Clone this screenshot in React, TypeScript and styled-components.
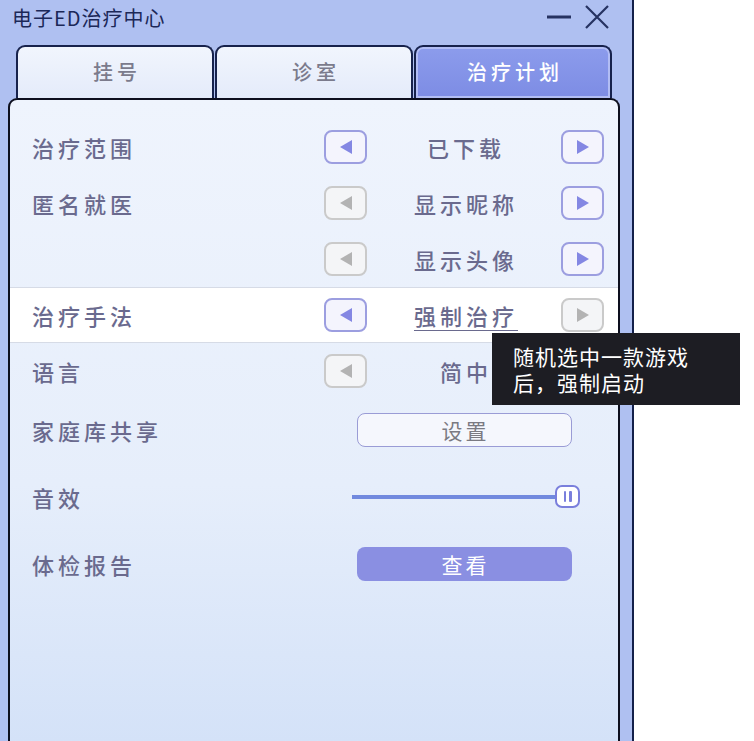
import React from 'react';
import styled, { createGlobalStyle, css } from 'styled-components';

const GlobalStyle = createGlobalStyle`
    html, body {
        margin: 0;
        padding: 0;
        background: #ffffff;
    }
    body {
        font-family: 'Noto Sans CJK SC', 'Noto Sans', sans-serif;
    }
`;

const Page = styled.div`
    position: relative;
    width: 754px;
    height: 741px;
    overflow: hidden;
    background: #ffffff;
`;

const Window = styled.div`
    width: 632px;
    height: 741px;
    display: flex;
    flex-direction: column;
    background: #afc0f1;
    border-right: 2px solid #14204a;
    overflow: hidden;
`;

const TitleBar = styled.div`
    height: 45px;
    display: flex;
    align-items: flex-start;
    justify-content: space-between;
    padding: 5px 22px 0 12px;
    box-sizing: border-box;
`;

const Title = styled.div`
    font-size: 20px;
    line-height: 26px;
    letter-spacing: 1px;
    color: #1c2858;
`;

const WindowControls = styled.div`
    display: flex;
    align-items: center;
    gap: 12px;
    margin-top: -1px;
`;

const TabRow = styled.div`
    display: flex;
    gap: 1px;
    padding-left: 16px;
    height: 53px;
`;

const Tab = styled.div<{ $active?: boolean }>`
    width: 198px;
    box-sizing: border-box;
    border: 2px solid #17224c;
    border-bottom: none;
    border-radius: 9px 9px 0 0;
    display: flex;
    align-items: center;
    justify-content: center;
    padding-bottom: 2px;
    font-size: 20px;
    font-weight: 500;
    letter-spacing: 4px;
    text-indent: 4px;
    color: #7b7b8c;
    background: linear-gradient(#f1f5fd, #e4ebfa);
    ${(p) =>
        p.$active &&
        css`
            color: #ffffff;
            background: linear-gradient(#8c9cec, #7d8ce4);
            box-shadow: inset 0 0 0 2px #b2bdf4;
        `}
`;

const Panel = styled.div`
    margin-left: 8px;
    width: 612px;
    flex: 1;
    box-sizing: border-box;
    border: 2px solid #0d0f1e;
    border-bottom: none;
    border-radius: 9px 9px 0 0;
    background: linear-gradient(#eff4fd 0%, #e6eefb 60%, #d4e2f8 100%);
    padding-top: 19px;
`;

const ActionList = styled.div`
    margin-top: -3px;
`;

const Row = styled.div<{ $tall?: boolean; $highlight?: boolean }>`
    display: grid;
    grid-template-columns: 1fr 280px;
    align-items: center;
    height: ${(p) => (p.$tall ? 67 : 56)}px;
    padding: 0 14px 0 22px;
    box-sizing: border-box;
    ${(p) =>
        p.$highlight &&
        css`
            background: #ffffff;
            border-top: 1px solid #d6dbe6;
            border-bottom: 1px solid #d6dbe6;
        `}
`;

const Label = styled.div`
    font-size: 22px;
    font-weight: 500;
    letter-spacing: 4px;
    color: #6a6a8e;
`;

const Chooser = styled.div`
    display: grid;
    grid-template-columns: 43px 1fr 43px;
    align-items: center;
`;

const Value = styled.div<{ $link?: boolean }>`
    text-align: center;
    font-size: 22px;
    font-weight: 500;
    letter-spacing: 4px;
    text-indent: 4px;
    color: #6a6a8e;
    ${(p) =>
        p.$link &&
        css`
            text-decoration: underline;
            text-underline-offset: 5px;
            text-decoration-thickness: 1px;
        `}
`;

const ArrowButton = styled.div<{ $disabled?: boolean }>`
    width: 43px;
    height: 34px;
    box-sizing: border-box;
    border-radius: 8px;
    border: 2px solid ${(p) => (p.$disabled ? '#cacaca' : '#9c9ee0')};
    background: ${(p) => (p.$disabled ? '#f4f5f7' : '#f4f4fd')};
    display: flex;
    align-items: center;
    justify-content: center;
    color: ${(p) => (p.$disabled ? '#b3b3b3' : '#8487e3')};
`;

const Center = styled.div`
    display: flex;
    justify-content: center;
    align-items: center;
`;

const WideButton = styled.div<{ $filled?: boolean }>`
    width: 215px;
    height: 34px;
    box-sizing: border-box;
    border-radius: 8px;
    display: flex;
    align-items: center;
    justify-content: center;
    font-size: 21px;
    letter-spacing: 3px;
    text-indent: 3px;
    ${(p) =>
        p.$filled
            ? css`
                  background: #8a8fe2;
                  color: #ffffff;
              `
            : css`
                  border: 1.5px solid #9a9cd6;
                  background: #f5f7fd;
                  color: #7a7a82;
              `}
`;

const Slider = styled.div`
    width: 228px;
    height: 24px;
    display: flex;
    align-items: center;
    margin-left: 4px;
`;

const Track = styled.div`
    flex: 1;
    height: 4px;
    background: #7189de;
    margin-right: -3px;
`;

const Thumb = styled.div`
    width: 25px;
    height: 23px;
    box-sizing: border-box;
    border: 2.5px solid #7a7fdc;
    border-radius: 7px;
    background: #ffffff;
    display: flex;
    align-items: center;
    justify-content: center;
    gap: 3px;
    &::before,
    &::after {
        content: '';
        width: 2.5px;
        height: 11px;
        background: #7a7fdc;
        border-radius: 1px;
    }
`;

const Tooltip = styled.div`
    position: absolute;
    left: 492px;
    top: 333px;
    width: 248px;
    height: 72px;
    box-sizing: border-box;
    padding: 10px 10px 0 21px;
    background: #1d1d23;
    color: #ffffff;
    font-size: 21px;
    line-height: 26px;
    letter-spacing: 1px;
`;

const Triangle: React.FC<{ dir: 'left' | 'right' }> = ({ dir }) => (
    <svg width="12" height="14" viewBox="0 0 12 14">
        {dir === 'left' ? <path d="M12 0 L0 7 L12 14 Z" fill="currentColor" /> : <path d="M0 0 L12 7 L0 14 Z" fill="currentColor" />}
    </svg>
);

const MinimizeIcon = () => (
    <svg width="26" height="26" viewBox="0 0 26 26">
        <path d="M1 13 H25" stroke="#263261" strokeWidth="3" />
    </svg>
);

const CloseIcon = () => (
    <svg width="26" height="26" viewBox="0 0 26 26">
        <path d="M2 2 L24 24 M24 2 L2 24" stroke="#263261" strokeWidth="2.2" />
    </svg>
);

type ChoiceRow = {
    label: string;
    value: string;
    leftOff?: boolean;
    rightOff?: boolean;
    highlight?: boolean;
    link?: boolean;
};

const choices: ChoiceRow[] = [
    { label: '治疗范围', value: '已下载' },
    { label: '匿名就医', value: '显示昵称', leftOff: true },
    { label: '', value: '显示头像', leftOff: true },
    { label: '治疗手法', value: '强制治疗', rightOff: true, highlight: true, link: true },
    { label: '语言', value: '简中', leftOff: true },
];

const tabs = ['挂号', '诊室', '治疗计划'];

export default function App() {
    return (
        <Page>
            <GlobalStyle />
            <Window>
                <TitleBar>
                    <Title>电子ED治疗中心</Title>
                    <WindowControls>
                        <MinimizeIcon />
                        <CloseIcon />
                    </WindowControls>
                </TitleBar>
                <TabRow>
                    {tabs.map((t, i) => (
                        <Tab key={t} $active={i === 2}>
                            {t}
                        </Tab>
                    ))}
                </TabRow>
                <Panel>
                    {choices.map((c, i) => (
                        <Row key={i} $highlight={c.highlight}>
                            <Label>{c.label}</Label>
                            <Chooser>
                                <ArrowButton $disabled={c.leftOff}>
                                    <Triangle dir="left" />
                                </ArrowButton>
                                <Value $link={c.link}>{c.value}</Value>
                                <ArrowButton $disabled={c.rightOff}>
                                    <Triangle dir="right" />
                                </ArrowButton>
                            </Chooser>
                        </Row>
                    ))}
                    <ActionList>
                        <Row $tall>
                            <Label>家庭库共享</Label>
                            <Center>
                                <WideButton>设置</WideButton>
                            </Center>
                        </Row>
                        <Row $tall>
                            <Label>音效</Label>
                            <Center>
                                <Slider>
                                    <Track />
                                    <Thumb />
                                </Slider>
                            </Center>
                        </Row>
                        <Row $tall>
                            <Label>体检报告</Label>
                            <Center>
                                <WideButton $filled>查看</WideButton>
                            </Center>
                        </Row>
                    </ActionList>
                </Panel>
            </Window>
            <Tooltip>
                随机选中一款游戏
                <br />
                后，强制启动
            </Tooltip>
        </Page>
    );
}
